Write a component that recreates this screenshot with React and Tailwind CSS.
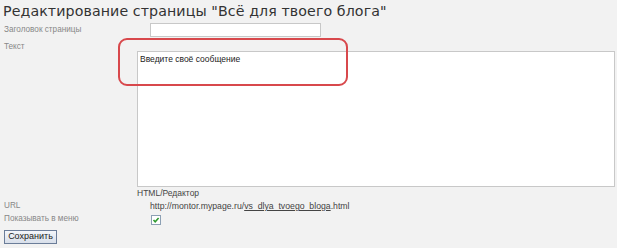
import React from "react";

export default function App() {
  return (
    <div className="relative w-[617px] h-[248px] bg-[#f2f2f2] overflow-hidden font-['Liberation_Sans',sans-serif]">
      <h1 className="pl-[3px] pt-[1px] h-[21px] text-[14.2px] leading-[20px] text-[#333] tracking-[0.1px] font-['DejaVu_Sans',sans-serif]">
        Редактирование страницы "Всё для твоего блога"
      </h1>
      <div className="flex flex-col">
        <div className="flex items-start h-[16px] mt-[1px]">
          <div className="w-[150px] pl-[4px] pt-[1px] text-[8.2px] leading-[13px] text-[#888]">Заголовок страницы</div>
          <div className="mt-[1px] w-[171px] h-[14px] bg-white border border-[#c8c8c8]" />
        </div>
        <div className="flex mt-[5px]">
          <div className="w-[137px] pl-[4px] -mt-[1px] text-[8.2px] leading-[10px] text-[#888]">Текст</div>
          <div className="mt-[8px] w-[478px] h-[136px] bg-white border border-[#c8c8c8] pl-[2px] pt-[1px] text-[8.5px] text-[#222]">
            Введите своё сообщение
          </div>
        </div>
        <div className="flex h-[13px] items-center">
          <div className="w-[137px]" />
          <div className="text-[8.5px] text-[#444]">HTML/Редактор</div>
        </div>
        <div className="flex h-[13px] items-center">
          <div className="w-[150px] pl-[4px] text-[8.2px] text-[#888]">URL</div>
          <div className="text-[8.7px] text-[#444]">
            http://montor.mypage.ru/<span className="underline">vs_dlya_tvoego_bloga</span>.html
          </div>
        </div>
        <div className="flex h-[13px] items-center">
          <div className="w-[151px] pl-[4px] text-[8.2px] text-[#888]">Показывать в меню</div>
          <div className="w-[10px] h-[10px] bg-white border border-[#8ca0b4] flex items-center justify-center">
            <svg width="8" height="8" viewBox="0 0 8 8">
              <path d="M1.5 4 L3.2 5.8 L6.6 2" fill="none" stroke="#2e9a2e" strokeWidth="1.6" />
            </svg>
          </div>
        </div>
        <div className="pl-[4px] mt-[4px]">
          <div className="w-[53px] h-[14px] border border-[#6b7d99] bg-gradient-to-b from-[#f4f6fa] to-[#d8dfea] text-[9px] text-[#222] flex items-center justify-center">
            Сохранить
          </div>
        </div>
      </div>
      <div className="absolute left-[118px] top-[38px] w-[230px] h-[48px] rounded-[9px] border-2 border-[#d8484c]" />
    </div>
  );
}
